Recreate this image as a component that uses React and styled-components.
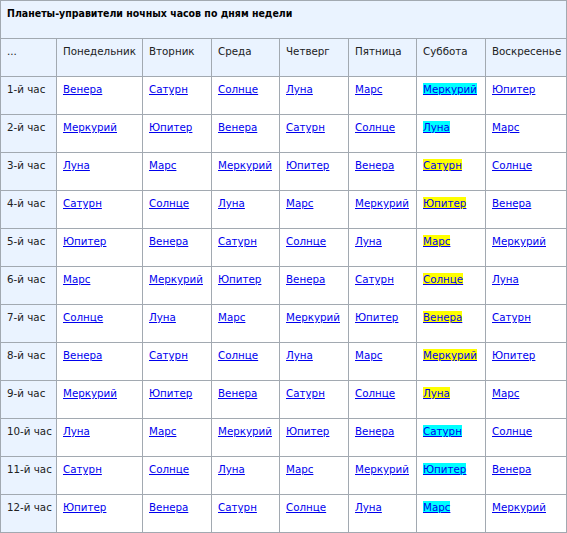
import React from 'react';
import styled, { createGlobalStyle } from 'styled-components';

const GlobalStyle = createGlobalStyle`
  html, body {
    margin: 0;
    padding: 0;
    background: #ffffff;
  }
  body {
    font-family: "DejaVu Sans", Verdana, sans-serif;
    font-size: 10.3px;
    color: #202122;
  }
`;

const days = ['Понедельник', 'Вторник', 'Среда', 'Четверг', 'Пятница', 'Суббота', 'Воскресенье'];
const widths = [56, 86, 69, 68, 69, 68, 69, 81];

// [планеты по дням, цвет подсветки субботы]
const rows = [
  [['Венера', 'Сатурн', 'Солнце', 'Луна', 'Марс', 'Меркурий', 'Юпитер'], 'cyan'],
  [['Меркурий', 'Юпитер', 'Венера', 'Сатурн', 'Солнце', 'Луна', 'Марс'], 'cyan'],
  [['Луна', 'Марс', 'Меркурий', 'Юпитер', 'Венера', 'Сатурн', 'Солнце'], 'yellow'],
  [['Сатурн', 'Солнце', 'Луна', 'Марс', 'Меркурий', 'Юпитер', 'Венера'], 'yellow'],
  [['Юпитер', 'Венера', 'Сатурн', 'Солнце', 'Луна', 'Марс', 'Меркурий'], 'yellow'],
  [['Марс', 'Меркурий', 'Юпитер', 'Венера', 'Сатурн', 'Солнце', 'Луна'], 'yellow'],
  [['Солнце', 'Луна', 'Марс', 'Меркурий', 'Юпитер', 'Венера', 'Сатурн'], 'yellow'],
  [['Венера', 'Сатурн', 'Солнце', 'Луна', 'Марс', 'Меркурий', 'Юпитер'], 'yellow'],
  [['Меркурий', 'Юпитер', 'Венера', 'Сатурн', 'Солнце', 'Луна', 'Марс'], 'yellow'],
  [['Луна', 'Марс', 'Меркурий', 'Юпитер', 'Венера', 'Сатурн', 'Солнце'], 'cyan'],
  [['Сатурн', 'Солнце', 'Луна', 'Марс', 'Меркурий', 'Юпитер', 'Венера'], 'cyan'],
  [['Юпитер', 'Венера', 'Сатурн', 'Солнце', 'Луна', 'Марс', 'Меркурий'], 'cyan'],
];

const Table = styled.table`
  width: 566px;
  table-layout: fixed;
  border-collapse: collapse;
`;

const Caption = styled.th`
  height: 38px;
  padding: 6px 6px 4px;
  box-sizing: border-box;
  background: #eaf3ff;
  border: 1px solid #a2a9b1;
  text-align: left;
  vertical-align: top;
  font-family: "DejaVu Sans Condensed", "DejaVu Sans", sans-serif;
  font-size: 10.5px;
  font-weight: bold;
  color: #000000;
`;

const Head = styled.th`
  height: 38px;
  padding: 6px 6px 4px;
  box-sizing: border-box;
  background: #eaf3ff;
  border: 1px solid #a2a9b1;
  font-weight: normal;
  text-align: left;
  vertical-align: top;
  white-space: nowrap;
`;

const Cell = styled.td`
  height: 38px;
  padding: 6px 6px 4px;
  box-sizing: border-box;
  background: #ffffff;
  border: 1px solid #a2a9b1;
  vertical-align: top;
  white-space: nowrap;
`;

const Planet = styled.a`
  color: #0000ee;
  text-decoration: underline;
  background: ${(p) => p.$mark || 'transparent'};
`;

export default function App() {
  return (
    <>
      <GlobalStyle />
      <Table>
        <colgroup>
          {widths.map((w, i) => (
            <col key={i} style={{ width: w }} />
          ))}
        </colgroup>
        <thead>
          <tr>
            <Caption colSpan={8}>Планеты-управители ночных часов по дням недели</Caption>
          </tr>
          <tr>
            <Head>...</Head>
            {days.map((d) => (
              <Head key={d}>{d}</Head>
            ))}
          </tr>
        </thead>
        <tbody>
          {rows.map(([planets, mark], r) => (
            <tr key={r}>
              <Head as="td">{r + 1}-й час</Head>
              {planets.map((p, i) => (
                <Cell key={i}>
                  <Planet href="#" $mark={i === 5 ? mark : null}>
                    {p}
                  </Planet>
                </Cell>
              ))}
            </tr>
          ))}
        </tbody>
      </Table>
    </>
  );
}
